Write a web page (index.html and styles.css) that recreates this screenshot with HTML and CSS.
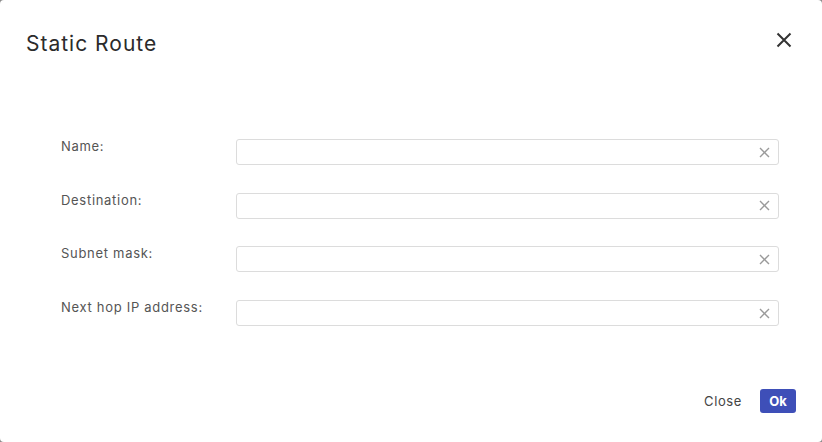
FILE: index.html
```html
<!DOCTYPE html>
<html>
<head>
<meta charset="utf-8">
<link rel="stylesheet" href="styles.css">
</head>
<body>
<div class="dialog">
  <div class="header">
    <h1 class="title">Static Route</h1>
    <button class="close-x" aria-label="Close">
      <svg width="16" height="16" viewBox="0 0 16 16"><path d="M1.5 1.5L14.5 14.5M14.5 1.5L1.5 14.5" stroke="#333" stroke-width="2" fill="none"/></svg>
    </button>
  </div>
  <div class="form">
    <div class="row">
      <label class="label">Name:</label>
      <div class="input"><span class="clear"><svg width="11" height="11" viewBox="0 0 11 11"><path d="M1 1L10 10M10 1L1 10" stroke="#9a9a9a" stroke-width="1.4" fill="none"/></svg></span></div>
    </div>
    <div class="row">
      <label class="label">Destination:</label>
      <div class="input"><span class="clear"><svg width="11" height="11" viewBox="0 0 11 11"><path d="M1 1L10 10M10 1L1 10" stroke="#9a9a9a" stroke-width="1.4" fill="none"/></svg></span></div>
    </div>
    <div class="row">
      <label class="label">Subnet mask:</label>
      <div class="input"><span class="clear"><svg width="11" height="11" viewBox="0 0 11 11"><path d="M1 1L10 10M10 1L1 10" stroke="#9a9a9a" stroke-width="1.4" fill="none"/></svg></span></div>
    </div>
    <div class="row">
      <label class="label">Next hop IP address:</label>
      <div class="input"><span class="clear"><svg width="11" height="11" viewBox="0 0 11 11"><path d="M1 1L10 10M10 1L1 10" stroke="#9a9a9a" stroke-width="1.4" fill="none"/></svg></span></div>
    </div>
  </div>
  <div class="footer">
    <button class="btn-text">Close</button>
    <button class="btn-primary">Ok</button>
  </div>
</div>
</body>
</html>
```
FILE: styles.css
```css
html, body {
  margin: 0;
  padding: 0;
  background: #8a8a8a;
}
body {
  font-family: "Inter", "Noto Sans", sans-serif;
}
.dialog {
  width: 822px;
  height: 442px;
  background: #fff;
  border-radius: 4px;
  box-sizing: border-box;
  display: flex;
  flex-direction: column;
}
.header {
  display: flex;
  justify-content: space-between;
  align-items: center;
  padding: 28px 30px 0 26px;
  height: 30px;
}
.title {
  margin: 0;
  font-size: 21px;
  font-weight: 400;
  color: #2b2b2b;
  letter-spacing: 1px;
}
.close-x {
  border: 0;
  background: none;
  padding: 0;
  width: 16px;
  height: 16px;
  margin-top: -6px;
  cursor: pointer;
}
.form {
  display: flex;
  flex-direction: column;
  gap: 27.7px;
  padding: 81px 43px 0 61px;
}
.row {
  display: flex;
  align-items: flex-start;
  height: 26px;
}
.label {
  width: 175px;
  font-size: 13px;
  color: #555;
  line-height: 14px;
  letter-spacing: 0.7px;
}
.input {
  flex: 1;
  height: 26px;
  box-sizing: border-box;
  border: 1px solid #dcdcdc;
  border-radius: 3px;
  display: flex;
  justify-content: flex-end;
  align-items: center;
  padding-right: 8px;
}
.clear {
  display: flex;
}
.footer {
  margin-top: auto;
  display: flex;
  justify-content: flex-end;
  align-items: center;
  gap: 18px;
  padding: 0 26px 29px 0;
}
.btn-text {
  border: 0;
  background: none;
  font-family: inherit;
  font-size: 13px;
  color: #444;
  padding: 0;
  letter-spacing: 0.6px;
}
.btn-primary {
  border: 0;
  background: #3e4fb8;
  color: #fff;
  font-family: inherit;
  font-weight: 700;
  font-size: 13px;
  width: 36px;
  height: 24px;
  border-radius: 3px;
  padding: 0;
}
```
